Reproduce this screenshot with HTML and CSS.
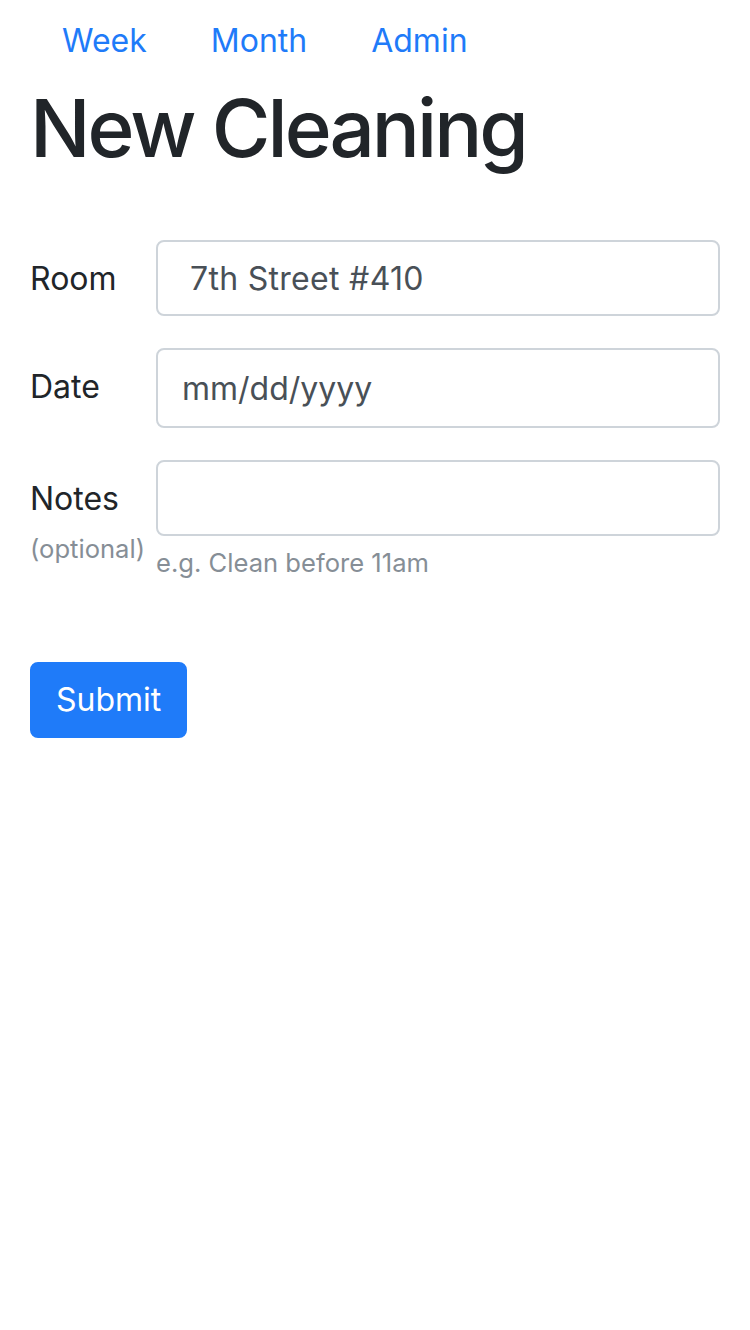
FILE: index.html
```html
<!DOCTYPE html>
<html lang="en">
<head>
<meta charset="utf-8">
<title>New Cleaning</title>
<link rel="stylesheet" href="styles.css">
</head>
<body>
<div class="container">
  <ul class="nav">
    <li><a class="nav-link" href="#">Week</a></li>
    <li><a class="nav-link" href="#">Month</a></li>
    <li><a class="nav-link" href="#">Admin</a></li>
  </ul>
  <h1 class="title">New Cleaning</h1>
  <form class="form">
    <div class="form-row">
      <label class="form-label" for="room">Room</label>
      <div class="form-field">
        <input class="form-control form-select" id="room" type="text" value="7th Street #410">
      </div>
    </div>
    <div class="form-row">
      <label class="form-label" for="date">Date</label>
      <div class="form-field">
        <input class="form-control form-date" id="date" type="text" placeholder="mm/dd/yyyy">
      </div>
    </div>
    <div class="form-row">
      <label class="form-label" for="notes">Notes<br><span class="label-muted">(optional)</span></label>
      <div class="form-field">
        <input class="form-control" id="notes" type="text">
        <small class="form-text">e.g. Clean before 11am</small>
      </div>
    </div>
    <div class="form-actions">
      <button class="btn-primary" type="submit">Submit</button>
    </div>
  </form>
</div>
</body>
</html>
```
FILE: styles.css
```css
* {
  box-sizing: border-box;
}

html, body {
  margin: 0;
  padding: 0;
  background: #ffffff;
}

body {
  font-family: Inter, "Noto Sans", Roboto, sans-serif;
  font-size: 32px;
  line-height: 1.5;
  color: #212529;
}

.container {
  padding: 0 30px;
}

.nav {
  display: flex;
  list-style: none;
  margin: 0;
  padding: 0;
}

.nav-link {
  display: block;
  padding: 17px 32px 15px;
  color: #1f7bf9;
  text-decoration: none;
  line-height: 48px;
}

.title {
  margin: 0 0 16px;
  font-size: 80px;
  font-weight: 500;
  line-height: 1.2;
  color: #212529;
  letter-spacing: -3px;
}

.form {
  padding-top: 48px;
}

.form-row {
  display: flex;
  margin-bottom: 32px;
}

.form-label {
  flex: 0 0 126px;
  padding-top: 15px;
  line-height: 48px;
  white-space: nowrap;
}

.label-muted {
  font-size: 25.6px;
  color: #868e96;
}

.form-field {
  flex: 1 1 auto;
  display: flex;
  flex-direction: column;
}

.form-control {
  display: block;
  width: 100%;
  height: 76px;
  padding: 12px 24px;
  font-family: inherit;
  font-size: 32px;
  line-height: 48px;
  color: #495057;
  background: #ffffff;
  border: 2px solid #ced4da;
  border-radius: 8px;
  outline: none;
}

.form-select {
  padding-left: 32px;
  letter-spacing: 0.3px;
}

.form-date {
  height: 80px;
}

.form-date::placeholder {
  color: #495057;
  opacity: 1;
}

.form-text {
  display: block;
  margin-top: 8px;
  font-size: 25.6px;
  line-height: 38.4px;
  color: #868e96;
}

.form-actions {
  padding-top: 48px;
}

.btn-primary {
  display: inline-block;
  padding: 12px 24px;
  font-family: inherit;
  font-size: 32px;
  line-height: 48px;
  color: #ffffff;
  background: #1f7bf9;
  border: 2px solid #1f7bf9;
  border-radius: 8px;
  cursor: pointer;
}
```
